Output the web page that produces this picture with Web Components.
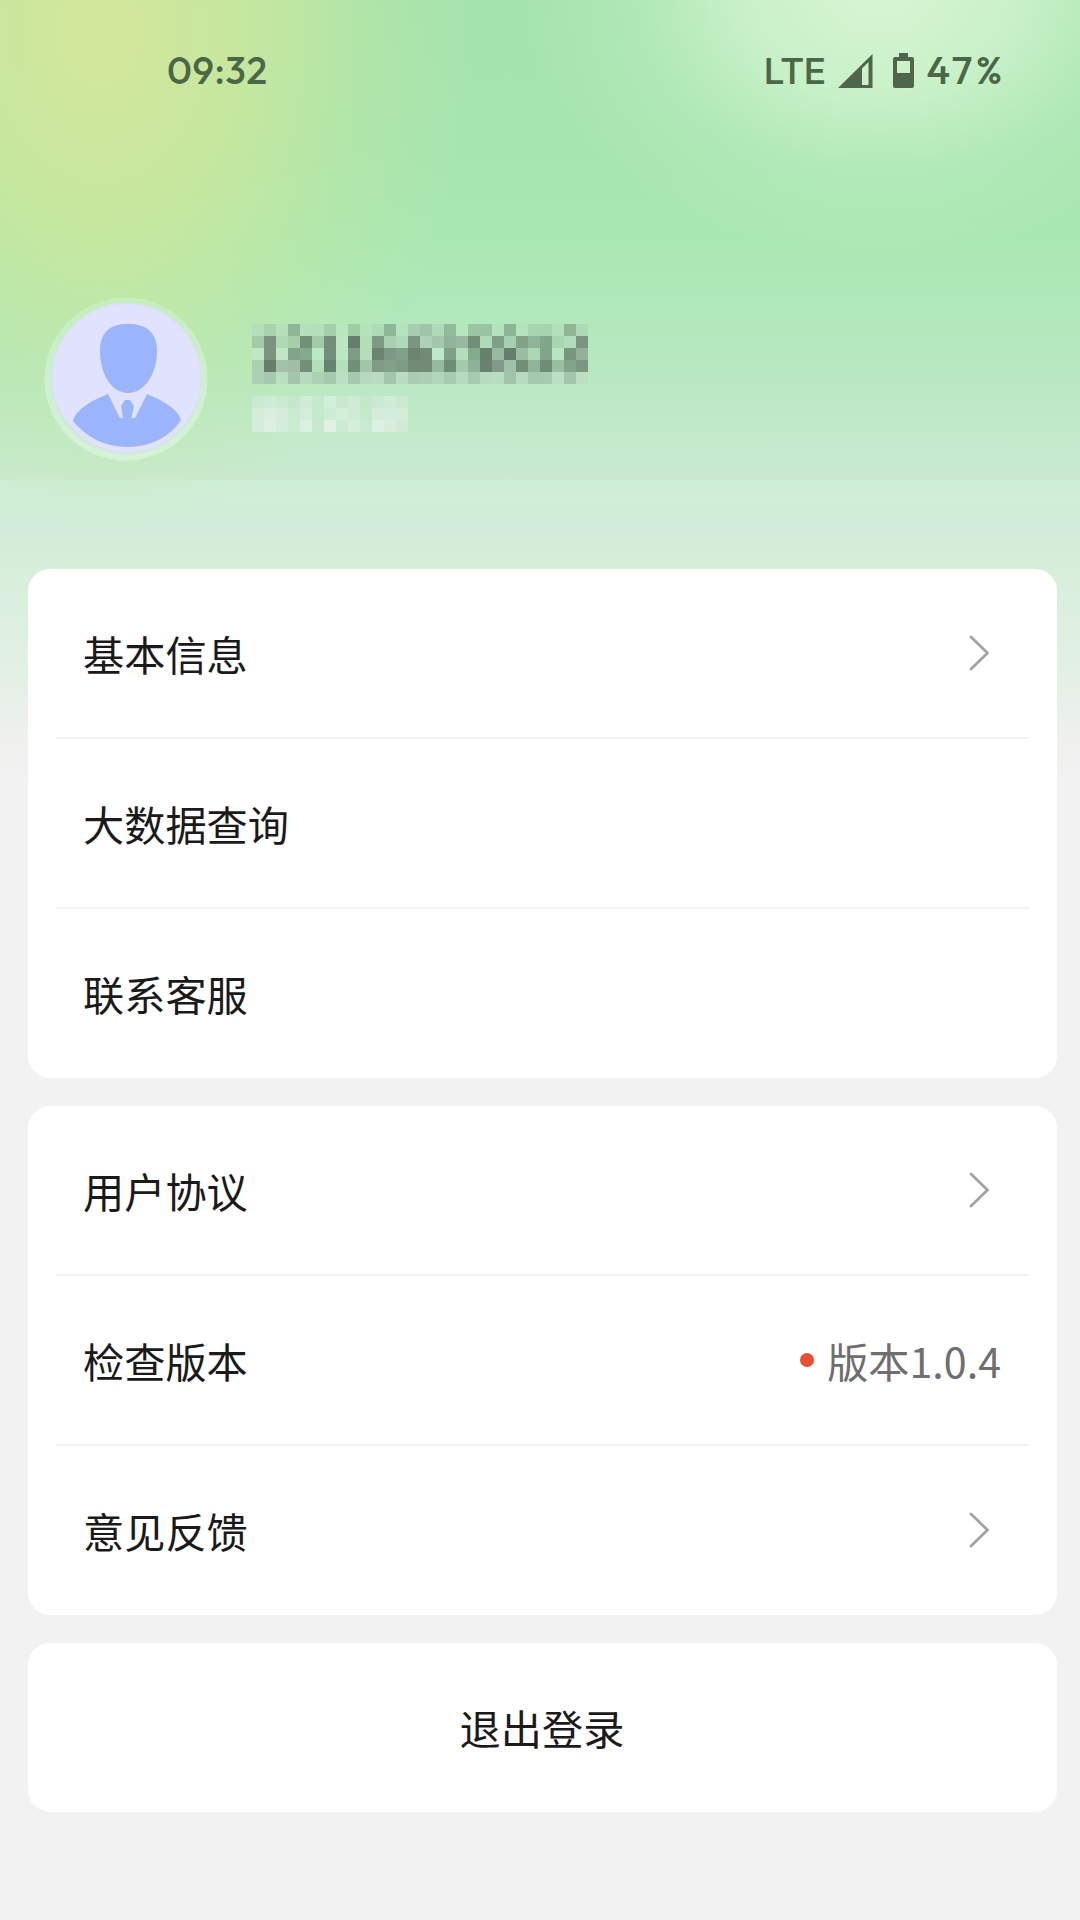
<!DOCTYPE html>
<html lang="zh-CN">
<head>
<meta charset="utf-8">
<title>我的</title>
<style>
html,body{margin:0;height:100%}
body{background:#f2f2f2;font-family:"Noto Sans CJK SC","Noto Sans",sans-serif;color:#1a1a1a}
</style>
</head>
<body>
<profile-page>
  <status-bar slot="top" time="09:32" network="LTE" battery="47%"></status-bar>
  <user-header slot="top"></user-header>
  <menu-card>
    <menu-row arrow>基本信息</menu-row>
    <menu-row>大数据查询</menu-row>
    <menu-row last>联系客服</menu-row>
  </menu-card>
  <menu-card>
    <menu-row arrow>用户协议</menu-row>
    <menu-row>检查版本<version-tag slot="end">版本1.0.4</version-tag></menu-row>
    <menu-row arrow last>意见反馈</menu-row>
  </menu-card>
  <menu-card>
    <menu-row center last>退出登录</menu-row>
  </menu-card>
</profile-page>
<script>
class Base extends HTMLElement{
  constructor(){super();this.attachShadow({mode:'open'});}
  connectedCallback(){this.shadowRoot.innerHTML=this.view();}
}

customElements.define('profile-page',class extends Base{
  view(){return `<style>
:host{display:flex;flex-direction:column;box-sizing:border-box;width:1080px;height:1920px;overflow:hidden;
background:
radial-gradient(ellipse 360px 270px at 880px -10px,rgba(218,247,214,.95) 0%,rgba(210,244,206,.8) 38%,rgba(192,240,195,.4) 68%,rgba(180,236,188,0) 100%),
radial-gradient(ellipse 370px 500px at 100px 30px,rgba(214,231,154,.95) 0%,rgba(206,232,154,.8) 38%,rgba(193,232,160,.38) 72%,rgba(180,230,170,0) 100%),
linear-gradient(#a5e3ae 0,#a7e5b0 150px,#aae8b3 240px,#b0e8ba 310px,#b9e8c2 380px,#c3eacc 440px,#cae9cf 479px,#ceefd7 481px,#d2ecd9 530px,#d7efda 565px,#dbefdf 610px,#e4f0e6 680px,#eff1ed 740px,#f2f2f2 780px)}
.top{display:flex;flex-direction:column;height:569px}
.list{display:flex;flex-direction:column;gap:28px;padding:0 23px 0 28px}
</style><div class="top"><slot name="top"></slot></div><div class="list"><slot></slot></div>`}
});

customElements.define('status-bar',class extends Base{
  view(){const a=n=>this.getAttribute(n);return `<style>
:host{display:flex;align-items:center;justify-content:space-between;box-sizing:border-box;height:142px;padding:0 78px 0 167px;color:#4a6747;font:500 38px/1 Outfit,Lato,"Open Sans",sans-serif}
.r{display:flex;align-items:center}
.t{letter-spacing:.6px;margin-top:-2px}
.n{margin-top:-2px;font-size:37px}
.b{margin:-2px -3.500px 0 0;font-size:39.500px;letter-spacing:3.500px}
svg{display:block}
</style><span class="t">${a('time')}</span>
<div class="r"><span class="n">${a('network')}</span>
<svg style="margin:0 20px 0 12px" width="35" height="36" viewBox="0 0 35 36"><path fill="#4f664a" fill-rule="evenodd" d="M34.5 1V35H0ZM24 15.500V32H30.500V9Z"/></svg>
<svg style="margin-right:13px" width="21" height="36" viewBox="0 0 21 36"><path fill="#4f664a" fill-rule="evenodd" d="M6 0h9v4h4q2 0 2 2v27q0 2-2 2H2q-2 0-2-2V6q0-2 2-2h4ZM4 8v12h13V8Z"/></svg>
<span class="b">${a('battery')}</span></div>`}
});

customElements.define('user-header',class extends Base{
  view(){return `<style>
:host{display:flex;align-items:flex-start;padding:154px 0 0 44px}
.info{display:flex;flex-direction:column;gap:12px;margin:28px 0 0 44px}
svg{display:block}
</style>
<svg width="164" height="166" viewBox="0 0 164 166">
<defs><linearGradient id="ring" x1="0" y1="0" x2="0" y2="1"><stop offset="0" stop-color="#c6edbd"/><stop offset=".5" stop-color="#cdf0ce"/><stop offset="1" stop-color="#d6f2d7"/></linearGradient></defs>
<circle cx="82" cy="83" r="81.500" fill="url(#ring)"/><circle cx="82.500" cy="82.500" r="76" fill="#d3e6e5"/><circle cx="82.500" cy="82" r="74" fill="#e0e2fe"/>
<path fill="#9ab5fb" d="M84 28C101 28 113 35 113 55C113 77 101 97 84 97C67 97 56 77 56 55C56 35 67 28 84 28Z"/>
<path fill="#9ab5fb" d="M64 98C49 104 32 113 29 125C43 142 62 151 83 151C106 151 126 141 137 124C134 113 118 104 103 98L91 122H87.500L90 110L86 104H81L77 110L79 122H76Z"/>
</svg>
<div class="info"><mosaic-strip kind="phone"></mosaic-strip><mosaic-strip kind="label"></mosaic-strip></div>`}
});

const MOSAIC={
 phone:[
 'b3dfbc a9d2b0 b5e0b9 8fb496 b6dfbb b3dfba a6ceac b8e6be a0cba7 b4e3bb aedab6 8fb598 b5e3bd a6cdb0 a0c4a8 afdab9 93b99b b5e6be 9cc3a4 9bc2a3 b5e2bd 8fb397 b4e3bd a9d4b1 a8d3b0 b3dfba 90b594 aed9b6',
 'a4cba9 7a9480 add8b2 a6cfa9 718f79 a3cba8 708e78 bce7c2 637e69 b3dfb8 7d9b83 a9cfb2 afd9b8 7a9683 add2b7 a1c8aa 92b39b 96b9a0 708e78 afdab8 7f9f86 a5cfae 80a287 8fb498 82a68c aad5b3 afdcba 7a9681',
 'bfe7c5 7a9480 bfe7c5 84a38c 86a88e bbe9c4 738f7b bce7c4 7e9c85 b4deba 6d8370 7d9889 82a08a 6c8370 728a76 bce9c9 7f9f87 b3deba 84aa8d 66806d 98baa1 647e6b 98bda0 aad8b4 82a58b b4e6bf 79957f 91b199',
 'aad0b1 677d6c a3c1aa 9fbea5 738f7a b4deba 668370 b6dfbc 718e79 a2c5a9 7f9b84 81a088 7e9b84 728a76 738b77 96b99f 6e8c76 a4c9ac 8eb296 69826f 80998a 9fc1a7 728e79 8fb497 6f8d76 99bda1 83a48b 7d9682',
 'abd0b3 a4c9ac b9dfc0 a3c5ab b6dabc acd1b4 a5c9ad badfc2 a5c9ad b6d9bd b9dcc1 a3c5ab badcc2 a9ccb2 abceb4 b2d6bb a7cbaf b5dabf a6caae b7dbc0 b9ddc2 a2c5aa b7dbc0 a5c9ad a6cab0 bbdfc3 a4c6ab bbdfc3'],
 label:[
 'c9e9d1 cdebd5 cae9d1 c5e8cc ceecd6 c6e9cd d3eeda c9e9cf ceebd5 c5e8cc cbe9d2 cfecd6 cae9d1',
 'd4eddb d7eee0 d4eddb c9ebd0 d4eedb c5e9cc cdecd4 d5eedc cfebd5 c5e9cc d4eddb d3eddb d4eddb',
 'd2edd9 deefe1 d4eddb cbebd2 dcf0e0 c8e9cf e3f0e4 cdebd4 d7eedd cbe9d2 dcf1e5 d9eddd d1ebd7']};
customElements.define('mosaic-strip',class extends Base{
  view(){return `<style>:host{display:block}.row{display:flex;height:12px}i{width:12px;height:12px}</style>`+
   MOSAIC[this.getAttribute('kind')].map(r=>`<div class="row">${r.split(' ').map(c=>`<i style="background:#${c}"></i>`).join('')}</div>`).join('')}
});

customElements.define('menu-card',class extends Base{
  view(){return `<style>:host{display:flex;flex-direction:column;background:#fff;border-radius:22px;padding:0 28px}</style><slot></slot>`}
});

customElements.define('menu-row',class extends Base{
  view(){const h=n=>this.hasAttribute(n);return `<style>
:host{display:flex;align-items:center;justify-content:space-between;box-sizing:border-box;height:170px;padding:0 28px 1px 27px;border-bottom:2px solid #f2f2f2;font-size:41.2px;line-height:60px}
:host([last]){border-bottom:0;height:169px;padding-bottom:2px}
:host([center]){justify-content:center}
svg{display:block;margin:0 11px 0 0}
</style><span><slot></slot></span>${h('arrow')?'<svg width="22" height="38" viewBox="0 0 22 38"><path d="M3 3L19.500 19L3 35" fill="none" stroke="#a3a3a3" stroke-width="2.800" stroke-linecap="round" stroke-linejoin="round"/></svg>':'<slot name="end"></slot>'}`}
});

customElements.define('version-tag',class extends Base{
  view(){return `<style>
:host{display:flex;align-items:center;gap:13px;color:#6e6e70}
i{width:14px;height:14px;border-radius:50%;background:#e95030;margin-top:1px}
</style><i></i><span><slot></slot></span>`}
});
</script>
</body>
</html>
